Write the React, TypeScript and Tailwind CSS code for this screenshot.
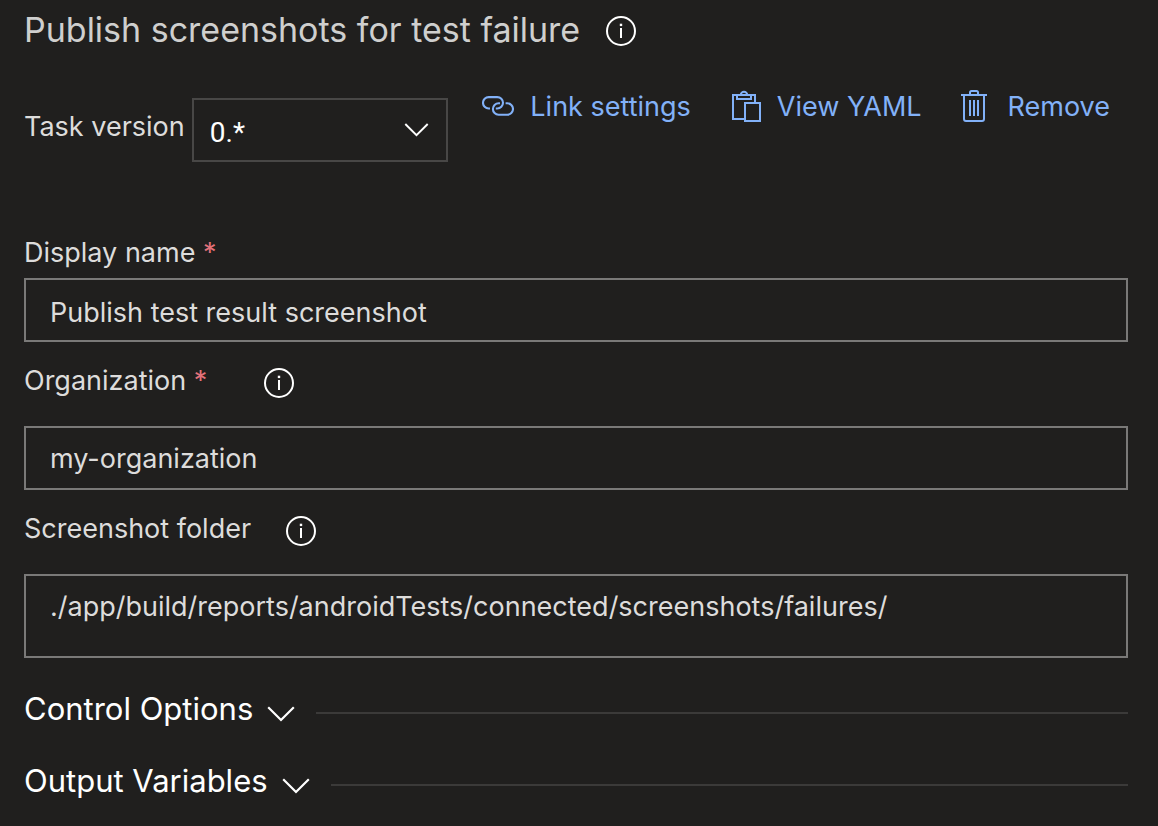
import { useState, type ReactNode } from "react";

function InfoButton({ label }: { label: string }) {
  return (
    <button type="button" aria-label={label} className="size-8 shrink-0 text-white">
      <svg viewBox="0 0 32 32" className="size-8" fill="none">
        <circle cx="16" cy="16" r="14" stroke="currentColor" strokeWidth="2" />
        <path d="M16 13v10" stroke="currentColor" strokeWidth="2" />
        <path d="M16 8.7v2.4" stroke="currentColor" strokeWidth="2.4" />
      </svg>
    </button>
  );
}

function Chevron({ className }: { className: string }) {
  return (
    <svg viewBox="0 0 28 16" className={className} fill="none" stroke="currentColor" strokeWidth="2.2">
      <path d="M1.2 1.2 14 14 26.8 1.2" />
    </svg>
  );
}

function LinkIcon() {
  return (
    <svg viewBox="0 0 32 32" className="size-8 shrink-0" fill="none" stroke="currentColor" strokeWidth="2.1">
      <path d="M8 18.500H6.700A5.700 5.700 0 0 1 6.700 7.100H15.300A5.700 5.700 0 0 1 15.300 18.500H13.800" />
      <path d="M18 13.300H16.600A5.700 5.700 0 0 0 16.600 24.700H25.300A5.700 5.700 0 0 0 25.300 13.300H23.600" />
    </svg>
  );
}

function ClipboardIcon() {
  return (
    <svg viewBox="0 0 32 32" className="size-8 shrink-0" fill="none" stroke="currentColor" strokeWidth="2">
      <path d="M16 29H4V5H26V12" />
      <path d="M8 5V9H22V5H18.200A3.200 3.200 0 0 0 11.800 5H8" />
      <path d="M16 13H31V31H16Z" />
    </svg>
  );
}

function TrashIcon() {
  return (
    <svg viewBox="0 0 32 32" className="size-8 shrink-0" fill="none" stroke="currentColor" strokeWidth="2">
      <path d="M1 5H27M10 5V2.500Q10 1 11.500 1H16.500Q18 1 18 2.500V5M4 5V29Q4 31 6 31H22Q24 31 24 29V5" />
      <path d="M10 10V26M14 10V26M18 10V26" />
    </svg>
  );
}

function ActionButton({ icon, children }: { icon: ReactNode; children: ReactNode }) {
  return (
    <button type="button" className="flex items-start gap-4 whitespace-nowrap text-[#82b1f8]">
      <span className="pt-0.5">{icon}</span>
      <span className="pt-px">{children}</span>
    </button>
  );
}

function Required() {
  return <span className="text-[#e3717a]"> *</span>;
}

function Section({ title }: { title: string }) {
  const [open, setOpen] = useState(false);
  return (
    <div className="flex h-[72px] items-center gap-[21px]">
      <button
        type="button"
        aria-expanded={open}
        onClick={() => setOpen(!open)}
        className="flex items-center gap-[14px] whitespace-nowrap text-[31px] leading-10 text-white"
      >
        <span className="pb-0.5">{title}</span>
        <span className="pt-2">
          <Chevron className="h-4 w-7" />
        </span>
      </button>
      <hr className="mt-1.5 grow border-t-2 border-[#3b3a39]" />
    </div>
  );
}

const field = "block w-full border-2 border-[#7a7978] bg-transparent px-6 text-[#dddcdb] outline-none";

export default function App() {
  return (
    <main className="min-h-screen bg-[#201f1e] pr-[30px] pb-2 pl-6 font-['Inter','Liberation_Sans',sans-serif] text-[27px] leading-9 text-[#dddcdb]">
      <header className="flex h-[62px] items-center gap-[25px]">
        <h1 className="pb-0.5 text-[34px] leading-10 text-[#cfcfce]">Publish screenshots for test failure</h1>
        <InfoButton label="About this task" />
      </header>

      <div className="mt-[26px] flex items-start justify-between">
        <div className="flex items-start gap-[7px]">
          <label htmlFor="version" className="mt-[21px] whitespace-nowrap">
            Task version
          </label>
          <div className="mt-2.5 grid w-64 grid-cols-1 items-center text-white">
            <select
              id="version"
              className="col-start-1 row-start-1 h-16 w-full appearance-none border-2 border-[#484746] bg-[#201f1e] pt-1.5 pl-4 font-['Roboto',sans-serif] text-[28px] outline-none"
            >
              <option>0.*</option>
            </select>
            <span className="pointer-events-none col-start-1 row-start-1 mr-[19px] justify-self-end">
              <Chevron className="h-3.5 w-[25px]" />
            </span>
          </div>
        </div>
        <div className="mr-[18px] flex gap-[38px]">
          <ActionButton icon={<LinkIcon />}>Link settings</ActionButton>
          <ActionButton icon={<ClipboardIcon />}>View YAML</ActionButton>
          <ActionButton icon={<TrashIcon />}>Remove</ActionButton>
        </div>
      </div>

      <form className="mt-[73px]">
        <div className="flex h-[43px] items-start">
          <label htmlFor="name">
            Display name
            <Required />
          </label>
        </div>
        <input id="name" defaultValue="Publish test result screenshot" className={`${field} h-16 pt-1`} />

        <div className="flex h-[84px] items-start gap-14 pt-[21px]">
          <label htmlFor="organization">
            Organization
            <Required />
          </label>
          <span className="flex pt-1">
            <InfoButton label="About organization" />
          </span>
        </div>
        <input id="organization" defaultValue="my-organization" className={`${field} h-16`} />

        <div className="flex h-[84px] items-start gap-[34px] pt-[21px]">
          <label htmlFor="folder">Screenshot folder</label>
          <span className="flex pt-1">
            <InfoButton label="About screenshot folder" />
          </span>
        </div>
        <textarea
          id="folder"
          rows={1}
          defaultValue="./app/build/reports/androidTests/connected/screenshots/failures/"
          className={`${field} h-21 resize-none pt-[13px]`}
        />
      </form>

      <div className="mt-4">
        <Section title="Control Options" />
        <Section title="Output Variables" />
      </div>
    </main>
  );
}
